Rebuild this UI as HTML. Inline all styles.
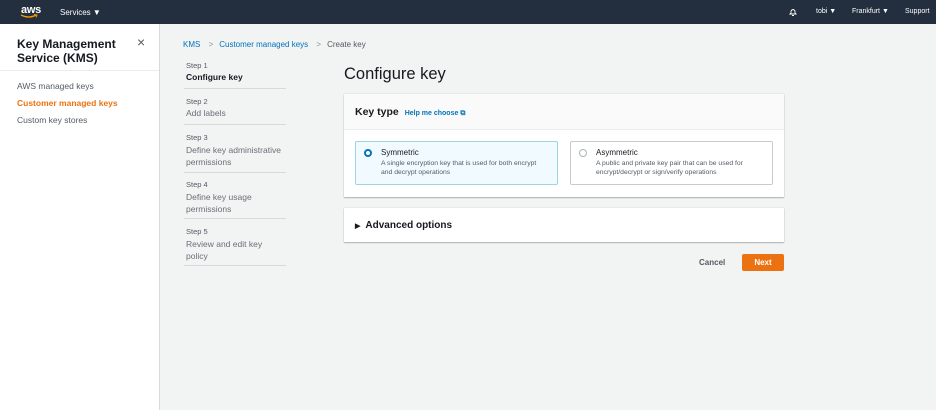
<!DOCTYPE html><html><head><style>
*{margin:0;padding:0;box-sizing:border-box}
body{width:936px;height:410px;overflow:hidden;background:#f2f3f3;font-family:"Liberation Sans",sans-serif;color:#16191f;position:relative}
.a{position:absolute;white-space:nowrap}
#hd{position:absolute;left:0;top:0;width:936px;height:24px;background:#232f3e;color:#fff;font-size:8px}
#sb{position:absolute;left:0;top:24px;width:160px;height:386px;background:#fff;border-right:1px solid #d5dbdb}
.st{font-size:7.5px;color:#545b64}
.sv{font-size:8.5px;color:#687078}
.ln{position:absolute;left:184px;width:102px;height:1px;background:#d5dbdb}
.card{position:absolute;border:1px solid #c6cccc;border-radius:2px;background:#fff}
</style></head><body>
<div id="hd">
<div class="a" style="left:21px;top:4px;font-size:11px;font-weight:bold;letter-spacing:-0.3px">aws</div>
<svg class="a" style="left:20px;top:14px" width="18" height="5"><path d="M1 1 Q9 5 16 1" stroke="#f90" stroke-width="1.3" fill="none"/><path d="M14 0.5 L17 1 L16 3.5" stroke="#f90" stroke-width="1" fill="none"/></svg>
<div class="a" style="left:60px;top:8px">Services ▼</div>
<svg class="a" style="left:788px;top:7px" width="10" height="10"><path d="M2 7 L3 6 L3 4 Q5 1 7 4 L7 6 L8 7 Z M4 8.5 L6 8.5" stroke="#fff" stroke-width="0.9" fill="none"/></svg>
<div class="a" style="left:816px;top:8px;font-size:7px">tobi ▼</div>
<div class="a" style="left:852px;top:8px;font-size:7px">Frankfurt ▼</div>
<div class="a" style="left:905px;top:8px;font-size:7px">Support</div>
</div>
<div id="sb">
<div class="a" style="left:17px;top:13px;font-size:12px;font-weight:bold;line-height:14px">Key Management<br>Service (KMS)</div>
<div class="a" style="left:137px;top:10px;font-size:14px;color:#545b64">×</div>
<div style="position:absolute;left:0;top:46px;width:159px;height:1px;background:#eaeded"></div>
<div class="a" style="left:17px;top:57px;font-size:8.5px;color:#545b64">AWS managed keys</div>
<div class="a" style="left:17px;top:74px;font-size:8.5px;color:#ec7211;font-weight:bold">Customer managed keys</div>
<div class="a" style="left:17px;top:91px;font-size:8.5px;color:#545b64">Custom key stores</div>
</div>
<div class="a" style="left:183px;top:40px;font-size:8px;color:#0073bb">KMS <span style="color:#879596;margin:0 6px">&gt;</span>Customer managed keys <span style="color:#879596;margin:0 6px">&gt;</span><span style="color:#545b64">Create key</span></div>
<div class="a st" style="left:186px;top:61px">Step 1</div>
<div class="a" style="left:186px;top:72px;font-size:8.5px;font-weight:bold">Configure key</div>
<div class="ln" style="top:88px"></div>
<div class="a st" style="left:186px;top:97px">Step 2</div>
<div class="a sv" style="left:186px;top:108px">Add labels</div>
<div class="ln" style="top:124px"></div>
<div class="a st" style="left:186px;top:133px">Step 3</div>
<div class="a sv" style="left:186px;top:144px;line-height:12px">Define key administrative<br>permissions</div>
<div class="ln" style="top:172px"></div>
<div class="a st" style="left:186px;top:180px">Step 4</div>
<div class="a sv" style="left:186px;top:191px;line-height:12px">Define key usage<br>permissions</div>
<div class="ln" style="top:218px"></div>
<div class="a st" style="left:186px;top:227px">Step 5</div>
<div class="a sv" style="left:186px;top:238px;line-height:12px">Review and edit key<br>policy</div>
<div class="ln" style="top:265px"></div>
<div class="a" style="left:344px;top:65px;font-size:16.5px">Configure key</div>
<div style="position:absolute;left:344px;top:94px;width:440px;height:103px;background:#fff;box-shadow:0 1px 1px rgba(0,0,0,.25),0 0 1px rgba(0,0,0,.2)">
<div style="height:36px;background:#fafafa;border-bottom:1px solid #eaeded"></div>
<div class="a" style="left:11px;top:12px;font-size:10.5px;font-weight:bold">Key type <span style="font-size:7px;color:#0073bb;margin-left:3px">Help me choose ⧉</span></div>
<div class="card" style="left:11px;top:47px;width:203px;height:44px;background:#f1faff;border-color:#9fd3e6"></div>
<div class="a" style="left:20px;top:55px;width:8px;height:8px;border-radius:50%;border:2.5px solid #0073bb;background:#fff"></div>
<div class="a" style="left:37px;top:54px;font-size:8px">Symmetric</div>
<div class="a" style="left:37px;top:65px;font-size:6.8px;color:#545b64;line-height:9px">A single encryption key that is used for both encrypt<br>and decrypt operations</div>
<div class="card" style="left:226px;top:47px;width:203px;height:44px"></div>
<div class="a" style="left:235px;top:55px;width:8px;height:8px;border-radius:50%;border:1px solid #aab7b8"></div>
<div class="a" style="left:252px;top:54px;font-size:8px">Asymmetric</div>
<div class="a" style="left:252px;top:65px;font-size:6.8px;color:#545b64;line-height:9px">A public and private key pair that can be used for<br>encrypt/decrypt or sign/verify operations</div>
</div>
<div style="position:absolute;left:344px;top:208px;width:440px;height:34px;background:#fff;box-shadow:0 1px 1px rgba(0,0,0,.25),0 0 1px rgba(0,0,0,.2)">
<div class="a" style="left:11px;top:12px;font-size:10px;font-weight:bold"><span style="font-size:7px;margin-right:5px">▶</span>Advanced options</div>
</div>
<div class="a" style="left:699px;top:258px;font-size:8px;font-weight:bold;color:#545b64">Cancel</div>
<div class="a" style="left:742px;top:254px;width:42px;height:17px;background:#ec7211;color:#fff;font-size:8px;font-weight:bold;text-align:center;line-height:17px;border-radius:2px">Next</div>
</body></html>
